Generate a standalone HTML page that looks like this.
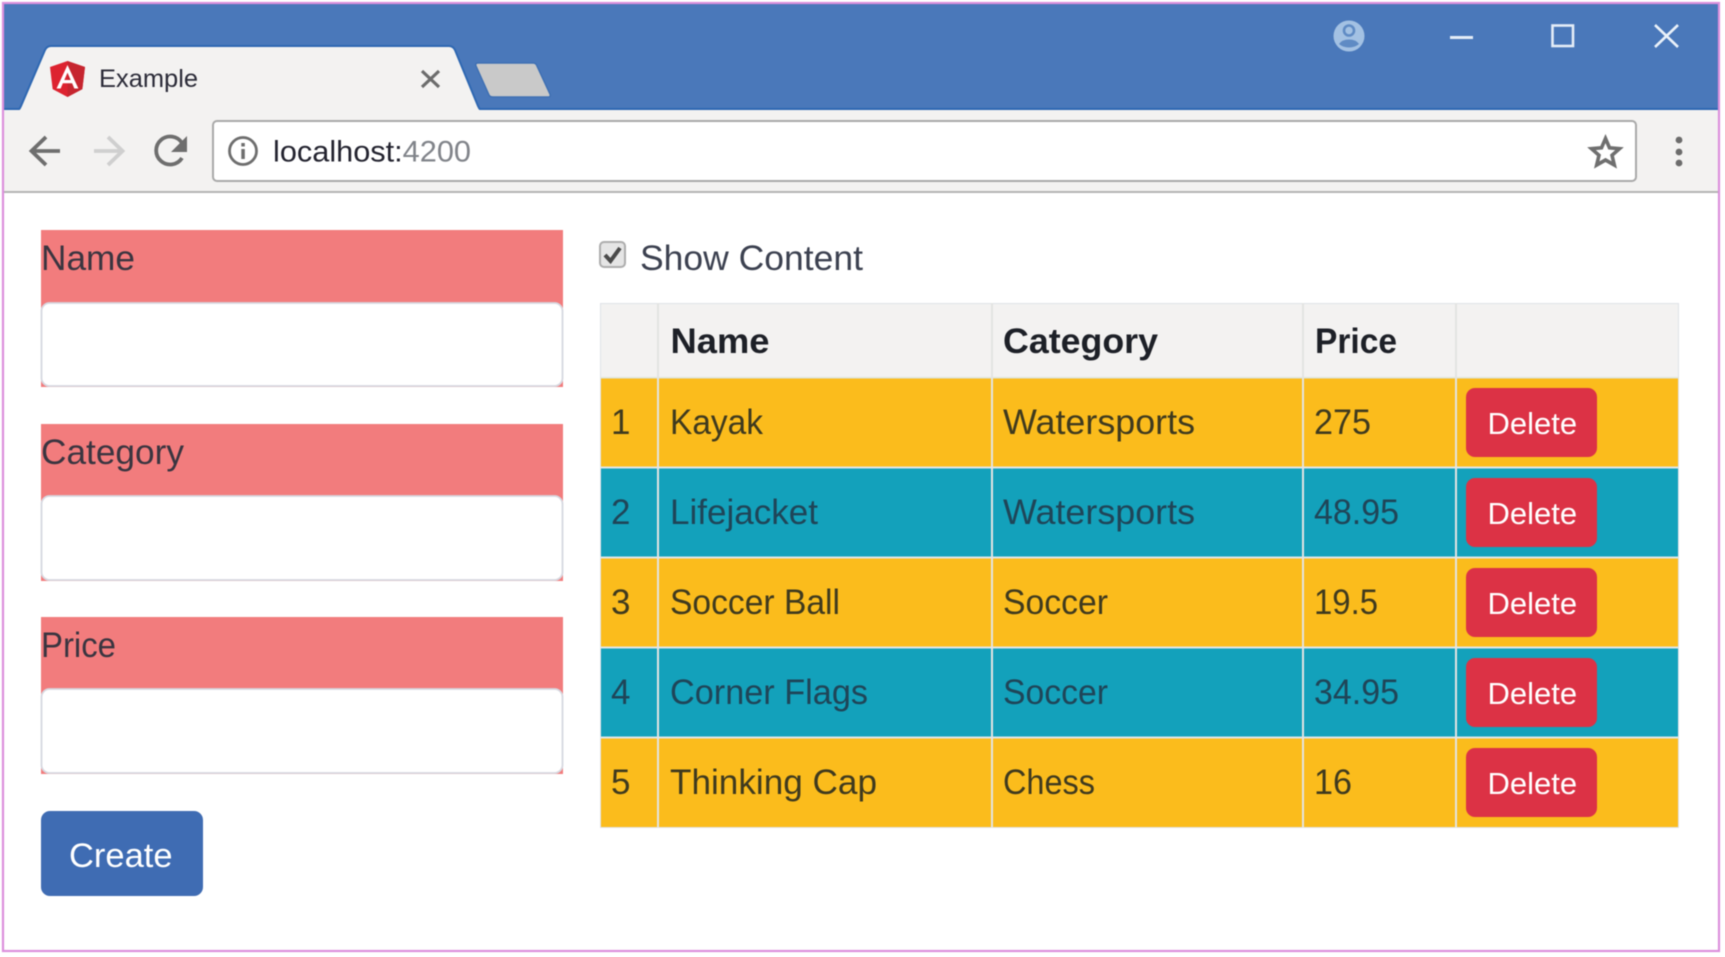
<!DOCTYPE html>
<html><head><meta charset="utf-8"><title>Example</title>
<style>
html,body{margin:0;padding:0;background:#fff;width:1725px;height:957px;overflow:hidden}
svg{display:block;filter:blur(.55px)}
text{font-family:"Liberation Sans",sans-serif}
.l{font-size:35px;fill:#3a3540}
.d{font-size:35px;fill:#3f3a1e}
.t{font-size:35px;fill:#1f4558}
.h{font-size:35px;font-weight:bold;fill:#1d2027}
.b{font-size:31px;fill:#fff}
</style></head><body>
<svg width="1725" height="957" viewBox="0 0 1725 957" xmlns="http://www.w3.org/2000/svg">
<rect width="1725" height="957" fill="#fff"/>
<!-- title bar -->
<rect x="4" y="4" width="1715" height="106" fill="#4a78ba"/>
<rect x="4" y="108" width="1715" height="3" fill="#2f68b2"/>
<!-- toolbar -->
<rect x="4" y="111" width="1715" height="80" fill="#f3f2f1"/>
<rect x="4" y="191" width="1715" height="2" fill="#b4b4b4"/>
<!-- tab -->
<path d="M15 111 Q19 111 21 106 L45 50 Q47 46 51 46 L449 46 Q453 46 455 50 L478 106 Q480 111 484 111 Z" fill="#f3f2f1" stroke="#2f68b2" stroke-width="2"/>
<rect x="4" y="110" width="1715" height="2" fill="#f3f2f1"/>
<!-- new tab -->
<path d="M478 63 Q475 63 476 66 L489 95 Q490 97 493 97 L548 97 Q551 97 550 94 L537 66 Q536 63 533 63 Z" fill="#c9c9c9" stroke="#3f70b3" stroke-width="1.5"/>
<!-- angular icon -->
<svg x="50" y="61" width="35" height="36" viewBox="31.9 30 186.2 200" preserveAspectRatio="none">
<polygon points="125,30 31.9,63.2 46.1,186.3 125,230 203.9,186.3 218.1,63.2" fill="#dd2330"/>
<polygon points="125,30 125,230 203.9,186.3 218.1,63.2" fill="#c6252f"/>
<path d="M125 52.1L66.8 182.6h21.7l11.7-29.2h49.4l11.7 29.2H183L125 52.1zM142 135.4H108l17-40.9L142 135.4z" fill="#fff"/>
</svg>
<text x="99" y="87" style="font-size:25px;fill:#2b2b38" textLength="99" lengthAdjust="spacingAndGlyphs">Example</text>
<path d="M422 71L439 87M439 71L422 87" stroke="#6c6c6c" stroke-width="3.2" fill="none"/>
<!-- window controls -->
<circle cx="1349" cy="36" r="15.5" fill="#a3c1e3"/>
<circle cx="1349" cy="30.500" r="5" fill="none" stroke="#5f8bc4" stroke-width="2.600"/>
<path d="M1339 44 Q1342 39.500 1349 39.500 Q1356 39.500 1359 44 Q1355 47.500 1349 47.500 Q1343 47.500 1339 44Z" fill="#5f8bc4"/>
<rect x="1450" y="36" width="23" height="3" fill="#e4edf7"/>
<rect x="1552.5" y="25.5" width="20.5" height="20.5" fill="none" stroke="#e4edf7" stroke-width="2.6"/>
<path d="M1655 25L1678 47M1678 25L1655 47" stroke="#eaf1f9" stroke-width="2.6" fill="none"/>
<!-- nav icons -->
<path d="M60 151H33M46 137L31.500 151L46 165" stroke="#6e6e6e" stroke-width="3.8" fill="none"/>
<path d="M94 151H121M108 137L122.500 151L108 165" stroke="#cfcfcf" stroke-width="3.800" fill="none"/>
<path d="M182 158A14 14 0 1 1 182 143" stroke="#6e6e6e" stroke-width="3.800" fill="none"/>
<path d="M187 136V152H171Z" fill="#6e6e6e"/>
<!-- address bar -->
<rect x="213" y="121" width="1423" height="60" rx="4" fill="#fff" stroke="#a9a9a9" stroke-width="2"/>
<circle cx="243" cy="151" r="13.500" fill="none" stroke="#6e6e6e" stroke-width="2.800"/>
<rect x="241.300" y="149" width="3.500" height="10" fill="#6e6e6e"/>
<rect x="241.300" y="143" width="3.500" height="3.500" fill="#6e6e6e"/>
<text x="273" y="161.500" style="font-size:30px" textLength="198" lengthAdjust="spacingAndGlyphs"><tspan fill="#23232f">localhost:</tspan><tspan fill="#81848a">4200</tspan></text>
<path d="M1605.500 138.500L1609.500 147.800L1619.500 148.700L1612 155.300L1614.300 165L1605.500 160L1596.700 165L1599 155.300L1591.500 148.700L1601.500 147.800Z" fill="none" stroke="#6f6f6f" stroke-width="3.600"/>
<circle cx="1679" cy="140" r="3.400" fill="#6c6c6c"/><circle cx="1679" cy="152" r="3.400" fill="#6c6c6c"/><circle cx="1679" cy="163" r="3.400" fill="#6c6c6c"/>

<!-- form -->
<rect x="41" y="230" width="522" height="157" fill="#f27c7d"/>
<rect x="41.500" y="303" width="521" height="83" rx="8" fill="#fff" stroke="#d6d8e0" stroke-width="1.800"/>
<text class="l" x="41" y="270" textLength="94" lengthAdjust="spacingAndGlyphs">Name</text>
<rect x="41" y="424" width="522" height="157" fill="#f27c7d"/>
<rect x="41.500" y="496" width="521" height="84" rx="8" fill="#fff" stroke="#d6d8e0" stroke-width="1.800"/>
<text class="l" x="41" y="464" textLength="143" lengthAdjust="spacingAndGlyphs">Category</text>
<rect x="41" y="617" width="522" height="157" fill="#f27c7d"/>
<rect x="41.500" y="689" width="521" height="84" rx="8" fill="#fff" stroke="#d6d8e0" stroke-width="1.800"/>
<text class="l" x="41" y="657" textLength="75" lengthAdjust="spacingAndGlyphs">Price</text>
<rect x="41" y="811" width="162" height="85" rx="9" fill="#3f6cb3"/>
<text x="69" y="867" style="font-size:34.500px;fill:#fff">Create</text>

<!-- checkbox -->
<rect x="600" y="242" width="25" height="25" rx="4" fill="#e5e5e5" stroke="#adadad" stroke-width="2"/>
<path d="M605 255L610.500 261L620 248" stroke="#4a4a4a" stroke-width="4" fill="none"/>
<text x="640" y="270" style="font-size:35px;fill:#3c4150" textLength="223" lengthAdjust="spacingAndGlyphs">Show Content</text>

<!-- table -->
<rect x="600" y="303" width="1079" height="525" fill="#dfe2e8"/>
<rect x="601" y="304" width="1077" height="73" fill="#f3f2f1"/>
<rect x="601" y="378" width="1077" height="89" fill="#fbbc1c"/>
<rect x="601" y="468" width="1077" height="89" fill="#13a1bb"/>
<rect x="601" y="558" width="1077" height="89" fill="#fbbc1c"/>
<rect x="601" y="648" width="1077" height="89" fill="#13a1bb"/>
<rect x="601" y="738" width="1077" height="89" fill="#fbbc1c"/>
<rect x="600" y="377" width="1079" height="1.500" fill="#dfe4dc"/>
<rect x="600" y="466.500" width="1079" height="2" fill="#dfe6e6"/>
<rect x="600" y="556.500" width="1079" height="2" fill="#dfe6e6"/>
<rect x="600" y="646.500" width="1079" height="2" fill="#dfe6e6"/>
<rect x="600" y="736.500" width="1079" height="2" fill="#dfe6e6"/>
<rect x="657" y="303" width="2" height="525" fill="#e3e4e2"/>
<rect x="991" y="303" width="2" height="525" fill="#e3e4e2"/>
<rect x="1302" y="303" width="2" height="525" fill="#e3e4e2"/>
<rect x="1455" y="303" width="2" height="525" fill="#e3e4e2"/>

<text class="h" x="670.500" y="353" textLength="99" lengthAdjust="spacingAndGlyphs">Name</text><text class="h" x="1003" y="353" textLength="155" lengthAdjust="spacingAndGlyphs">Category</text><text class="h" x="1315" y="353" textLength="82" lengthAdjust="spacingAndGlyphs">Price</text>

<text class="d" x="611" y="434">1</text><text class="d" x="670" y="434" textLength="93" lengthAdjust="spacingAndGlyphs">Kayak</text><text class="d" x="1003" y="434" textLength="192" lengthAdjust="spacingAndGlyphs">Watersports</text><text class="d" x="1314" y="434" textLength="57" lengthAdjust="spacingAndGlyphs">275</text>
<text class="t" x="611" y="524">2</text><text class="t" x="670" y="524" textLength="148" lengthAdjust="spacingAndGlyphs">Lifejacket</text><text class="t" x="1003" y="524" textLength="192" lengthAdjust="spacingAndGlyphs">Watersports</text><text class="t" x="1314" y="524" textLength="85" lengthAdjust="spacingAndGlyphs">48.95</text>
<text class="d" x="611" y="614">3</text><text class="d" x="670" y="614" textLength="170" lengthAdjust="spacingAndGlyphs">Soccer Ball</text><text class="d" x="1003" y="614" textLength="105" lengthAdjust="spacingAndGlyphs">Soccer</text><text class="d" x="1314" y="614" textLength="64" lengthAdjust="spacingAndGlyphs">19.5</text>
<text class="t" x="611" y="704">4</text><text class="t" x="670" y="704" textLength="198" lengthAdjust="spacingAndGlyphs">Corner Flags</text><text class="t" x="1003" y="704" textLength="105" lengthAdjust="spacingAndGlyphs">Soccer</text><text class="t" x="1314" y="704" textLength="85" lengthAdjust="spacingAndGlyphs">34.95</text>
<text class="d" x="611" y="794">5</text><text class="d" x="670" y="794" textLength="207" lengthAdjust="spacingAndGlyphs">Thinking Cap</text><text class="d" x="1003" y="794" textLength="92" lengthAdjust="spacingAndGlyphs">Chess</text><text class="d" x="1314" y="794" textLength="38" lengthAdjust="spacingAndGlyphs">16</text>

<rect x="1466" y="388" width="131" height="69" rx="9" fill="#dc3245"/><text class="b" x="1487.500" y="434">Delete</text>
<rect x="1466" y="478" width="131" height="69" rx="9" fill="#dc3245"/><text class="b" x="1487.500" y="524">Delete</text>
<rect x="1466" y="568" width="131" height="69" rx="9" fill="#dc3245"/><text class="b" x="1487.500" y="614">Delete</text>
<rect x="1466" y="658" width="131" height="69" rx="9" fill="#dc3245"/><text class="b" x="1487.500" y="704">Delete</text>
<rect x="1466" y="748" width="131" height="69" rx="9" fill="#dc3245"/><text class="b" x="1487.500" y="794">Delete</text>

<!-- outer border -->
<rect x="3" y="3" width="1716" height="948" fill="none" stroke="#dc90dc" stroke-width="2.200"/>
</svg>
</body></html>
